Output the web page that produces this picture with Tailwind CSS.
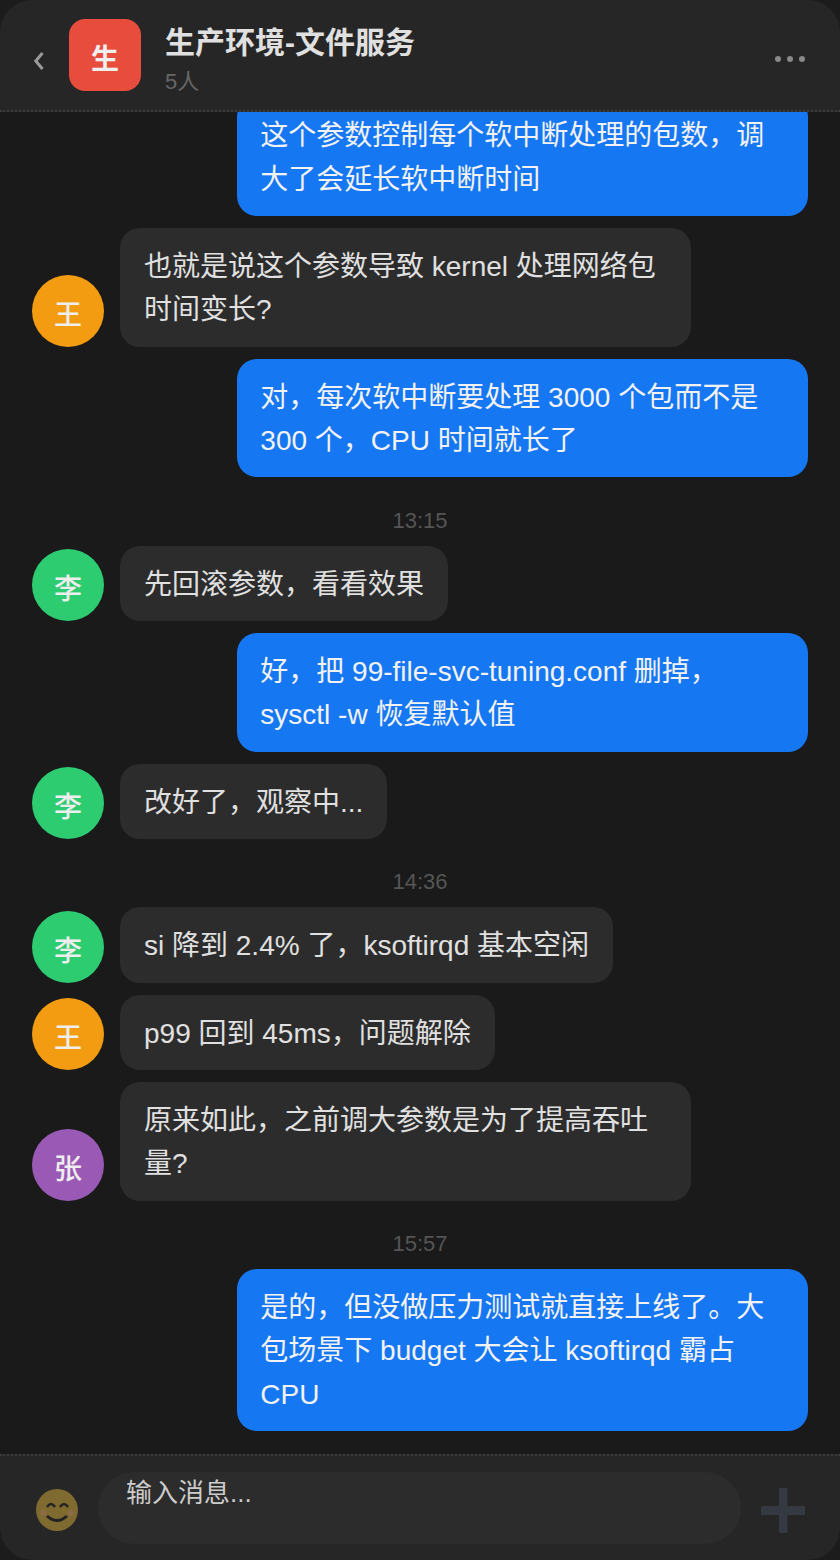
<!DOCTYPE html>
<html lang="zh">
<head>
    <meta charset="UTF-8">
    <meta name="viewport" content="width=device-width, initial-scale=1.0">
    <title>生产环境-文件服务</title>
    <script src="https://cdn.jsdelivr.net/npm/@tailwindcss/browser@4"></script>
</head>
<body class="bg-[#1c1c1c] font-['Liberation_Sans','Noto_Sans_CJK_SC',sans-serif]">
    <div class="w-[840px] h-[1560px] flex flex-col overflow-hidden rounded-[32px] bg-[#1a1a1a]">

        <!-- 顶部 -->
        <header class="h-[112px] shrink-0 flex items-center pl-[33px] pr-[32px] bg-[#262626] border-b-2 border-dotted border-[#3c3c3c] relative z-10">
            <svg class="w-[11px] h-[18px] mr-[25px] mt-[11px]" viewBox="0 0 11 18" fill="none" stroke="#999999" stroke-width="3"><path d="M9.5 1 L2.8 9 L9.5 17"/></svg>
            <div class="w-[72px] h-[72px] rounded-[16px] bg-[#e74c3c] flex items-center justify-center pt-[10px] text-[#eeeeee] text-[28px] font-bold">生</div>
            <div class="ml-[24px] flex-1 mt-[10px]">
                <div class="text-[30px] font-semibold leading-[40px] text-[#e0e0e0]">生产环境-文件服务</div>
                <div class="text-[22px] leading-[32px] mt-[3px] text-[#666666]">5人</div>
            </div>
            <div class="flex gap-[6px] mr-[3px] mt-[7px]">
                <span class="w-[6px] h-[6px] rounded-full bg-[#888888]"></span>
                <span class="w-[6px] h-[6px] rounded-full bg-[#888888]"></span>
                <span class="w-[6px] h-[6px] rounded-full bg-[#888888]"></span>
            </div>
        </header>

        <!-- 消息列表 -->
        <main class="flex-1 min-h-0 overflow-hidden flex flex-col justify-end gap-[12px] px-[32px] pb-[23px] text-[28px] leading-[43.3px]">
            <div class="shrink-0 self-end w-[571.2px] pl-[23.5px] pr-[24px] pt-[17px] pb-[15px] rounded-[20px] bg-[#1677f2] text-[#f2f2f2]">这个参数控制每个软中断处理的包数，调大了会延长软中断时间</div>

            <div class="shrink-0 flex items-end gap-[16px]">
                <div class="w-[72px] h-[72px] shrink-0 rounded-full bg-[#f39c12] flex items-center justify-center pt-[10px] text-[#eeeeee] text-[28px] font-medium">王</div>
                <div class="w-[571.2px] px-[24px] pt-[17px] pb-[15px] rounded-[20px] bg-[#2c2c2c] text-[#e0e0e0]">也就是说这个参数导致 kernel 处理网络包时间变长?</div>
            </div>

            <div class="shrink-0 self-end w-[571.2px] pl-[23.5px] pr-[24px] pt-[17px] pb-[15px] rounded-[20px] bg-[#1677f2] text-[#f2f2f2]">对，每次软中断要处理 3000 个包而不是 300 个，CPU 时间就长了</div>

            <div class="shrink-0 text-center text-[22px] leading-[32px] text-[#555555] mt-[16px] mb-[-3.5px]">13:15</div>

            <div class="shrink-0 flex items-end gap-[16px]">
                <div class="w-[72px] h-[72px] shrink-0 rounded-full bg-[#2ecc71] flex items-center justify-center pt-[10px] text-[#eeeeee] text-[28px] font-medium">李</div>
                <div class="px-[24px] pt-[17px] pb-[15px] rounded-[20px] bg-[#2c2c2c] text-[#e0e0e0]">先回滚参数，看看效果</div>
            </div>

            <div class="shrink-0 self-end w-[571.2px] pl-[23.5px] pr-[24px] pt-[17px] pb-[15px] rounded-[20px] bg-[#1677f2] text-[#f2f2f2]">好，把 99-file-svc-tuning.conf 删掉，sysctl -w 恢复默认值</div>

            <div class="shrink-0 flex items-end gap-[16px]">
                <div class="w-[72px] h-[72px] shrink-0 rounded-full bg-[#2ecc71] flex items-center justify-center pt-[10px] text-[#eeeeee] text-[28px] font-medium">李</div>
                <div class="px-[24px] pt-[17px] pb-[15px] rounded-[20px] bg-[#2c2c2c] text-[#e0e0e0]">改好了，观察中...</div>
            </div>

            <div class="shrink-0 text-center text-[22px] leading-[32px] text-[#555555] mt-[15px] mb-[-2.5px]">14:36</div>

            <div class="shrink-0 flex items-end gap-[16px]">
                <div class="w-[72px] h-[72px] shrink-0 rounded-full bg-[#2ecc71] flex items-center justify-center pt-[10px] text-[#eeeeee] text-[28px] font-medium">李</div>
                <div class="px-[24px] pt-[17px] pb-[15px] rounded-[20px] bg-[#2c2c2c] text-[#e0e0e0]">si 降到 2.4% 了，ksoftirqd 基本空闲</div>
            </div>

            <div class="shrink-0 flex items-end gap-[16px]">
                <div class="w-[72px] h-[72px] shrink-0 rounded-full bg-[#f39c12] flex items-center justify-center pt-[10px] text-[#eeeeee] text-[28px] font-medium">王</div>
                <div class="px-[24px] pt-[17px] pb-[15px] rounded-[20px] bg-[#2c2c2c] text-[#e0e0e0]">p99 回到 45ms，问题解除</div>
            </div>

            <div class="shrink-0 flex items-end gap-[16px]">
                <div class="w-[72px] h-[72px] shrink-0 rounded-full bg-[#9b59b6] flex items-center justify-center pt-[10px] text-[#eeeeee] text-[28px] font-medium">张</div>
                <div class="w-[571.2px] px-[24px] pt-[17px] pb-[15px] rounded-[20px] bg-[#2c2c2c] text-[#e0e0e0]">原来如此，之前调大参数是为了提高吞吐量?</div>
            </div>

            <div class="shrink-0 text-center text-[22px] leading-[32px] text-[#555555] mt-[15px] mb-[-2.5px]">15:57</div>

            <div class="shrink-0 self-end w-[571.2px] pl-[23.5px] pr-[24px] pt-[17px] pb-[15px] rounded-[20px] bg-[#1677f2] text-[#f2f2f2]">是的，但没做压力测试就直接上线了。大包场景下 budget 大会让 ksoftirqd 霸占 CPU</div>
        </main>

        <!-- 输入栏 -->
        <footer class="h-[106px] shrink-0 flex items-center pl-[34px] pr-[35px] bg-[#262626] border-t-2 border-dotted border-[#3c3c3c]">
            <svg class="w-[46px] h-[46px] shrink-0 mt-[4px]" viewBox="0 0 46 46">
                <circle cx="23" cy="23" r="21" fill="#7f6a30"/>
                <circle cx="9.5" cy="26" r="3" fill="#8d6b4a"/>
                <circle cx="36.5" cy="26" r="3" fill="#8d6b4a"/>
                <path d="M13 20 Q17 14 21 20 M26 20 Q30 14 34 20" fill="none" stroke="#222222" stroke-width="2.5"/>
                <path d="M13 29 Q23 38 33 29" fill="none" stroke="#222222" stroke-width="3"/>
            </svg>
            <div class="ml-[18px] w-[643px] h-[72px] shrink-0 rounded-[36px] bg-[#2c2c2c] px-[28px] text-[26px] leading-[42px] text-[#cccccc]">输入消息...</div>
            <svg class="ml-[20px] w-[44px] h-[45px] shrink-0 mt-[4px]" viewBox="0 0 44 45" fill="#353941">
                <rect x="18" y="0" width="8.5" height="45" rx="1"/>
                <rect x="0" y="18" width="44" height="9" rx="1"/>
            </svg>
        </footer>
    </div>
</body>
</html>
